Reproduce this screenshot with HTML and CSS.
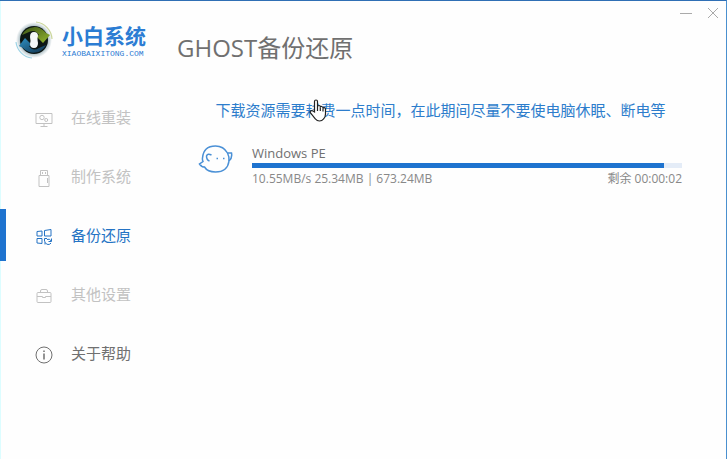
FILE: index.html
```html
<!DOCTYPE html>
<html lang="zh-CN">
<head>
    <meta charset="UTF-8">
    <meta name="viewport" content="width=device-width, initial-scale=1.0">
    <title>小白系统</title>
    <link rel="stylesheet" href="styles.css">
</head>
<body>
    <div class="window">
        <aside class="sidebar">
            <div class="logo">
                <svg class="logo-mark" viewBox="0 0 38 40" aria-hidden="true">
                    <defs>
                        <linearGradient id="green" x1="0" y1="0" x2="1" y2="1">
                            <stop offset="0" stop-color="#3c5416"/>
                            <stop offset="1" stop-color="#94b82e"/>
                        </linearGradient>
                        <linearGradient id="blue" x1="0" y1="0" x2="1" y2="1">
                            <stop offset="0" stop-color="#2f92c6"/>
                            <stop offset="1" stop-color="#10304a"/>
                        </linearGradient>
                        <radialGradient id="halo">
                            <stop offset="0.75" stop-color="#a9bcc2"/>
                            <stop offset="1" stop-color="#ffffff"/>
                        </radialGradient>
                    </defs>
                    <circle cx="19" cy="20" r="18" fill="url(#halo)"/>
                    <circle cx="19" cy="20" r="14" fill="#0c1614"/>
                    <path d="M7 15A14 14 0 0 1 31 13L35 15L28 23L21 16L24 15Q20 9 14 12Z" fill="url(#green)"/>
                    <path d="M31 25A14 14 0 0 1 8 28L4 26L10 18L17 25L14 26Q18 32 24 28Z" fill="url(#blue)"/>
                    <path d="M19 12Q23 12 23 16Q22 18 23 23Q23 28 19 28Q15 28 15 24Q16 21 15 17Q15 12 19 12Z" fill="#f4f8f8"/>
                    <path d="M21 2A18 18 0 0 1 37 19" fill="none" stroke="#cbd69b" stroke-width="1.2"/>
                    <path d="M1 22A18 18 0 0 0 17 38" fill="none" stroke="#9dd3e5" stroke-width="1.2"/>
                </svg>
                <div class="logo-text">
                    <span class="logo-name">小白系统</span>
                    <span class="logo-url">XIAOBAIXITONG.COM</span>
                </div>
            </div>
            <nav class="nav">
                <a class="nav-item" href="#">
                    <svg class="icon" viewBox="0 0 18 18" aria-hidden="true">
                        <path d="M1 3.5h16v10H1zM9 13.5v3M5.5 16.5h7"/>
                        <circle cx="7" cy="7.5" r="2.2"/>
                        <circle cx="11.2" cy="10" r="1.5"/>
                    </svg>
                    <span>在线重装</span>
                </a>
                <a class="nav-item" href="#">
                    <svg class="icon" viewBox="0 0 18 18" aria-hidden="true">
                        <path d="M5.5 6.5v-5h7v5M4 6.5h10v11H4zM7.5 3v2M10.5 3v2M12.5 9v5"/>
                    </svg>
                    <span>制作系统</span>
                </a>
                <a class="nav-item active" href="#">
                    <svg class="icon" viewBox="0 0 18 18" aria-hidden="true">
                        <path d="M2 3.5l5-.5v5H2zM9.5 2.500l6.500-1V8H9.500zM2 10.500h5v5L2 15zM12 10.500H9.500v3"/>
                        <path d="M16.500 10.500v3h-3M16.200 13A3.200 3.200 0 0 0 12 11.500M10 13.500v3M10.300 14.500a3.200 3.200 0 0 0 5.700.5"/>
                    </svg>
                    <span>备份还原</span>
                </a>
                <a class="nav-item" href="#">
                    <svg class="icon" viewBox="0 0 18 18" aria-hidden="true">
                        <rect x="2" y="5.500" width="14" height="10" rx="1"/>
                        <path d="M5.500 5.500v-1.500q0-1.500 1.500-1.500h4q1.500 0 1.500 1.500v1.500M2 9.500h5.500v1h3v-1H16"/>
                    </svg>
                    <span>其他设置</span>
                </a>
                <a class="nav-item enabled" href="#">
                    <svg class="icon" viewBox="0 0 18 18" aria-hidden="true">
                        <circle cx="9" cy="9" r="8"/>
                        <path d="M9 7.500v6M9 4.500v1.500" stroke-width="1.500"/>
                    </svg>
                    <span>关于帮助</span>
                </a>
            </nav>
        </aside>

        <main class="main">
            <div class="window-buttons">
                <button type="button" aria-label="最小化">
                    <svg viewBox="0 0 12 12"><path d="M0 6.500h12"/></svg>
                </button>
                <button type="button" aria-label="关闭">
                    <svg viewBox="0 0 12 12"><path d="M1 1l10 10M11 1L1 11"/></svg>
                </button>
            </div>
            <h1 class="title">GHOST备份还原</h1>
            <p class="notice">
                下载资源需要耗费一点时间，在此期间尽量不要使电脑休眠、断电等
                <svg class="cursor" viewBox="0 0 18 23" aria-hidden="true">
                    <path d="M5.500 13V2.500Q5.500 1 7 1T8.500 2.500V8Q8.500 6.500 10 6.500T11.300 8V8.500Q11.500 7.300 12.700 7.500T14 9V9.500Q14.300 8.500 15.300 8.700T16.500 10V15Q16.500 18 14.500 20Q13 22 10.500 22Q8 22 6.500 20L1.500 14Q.7 12.700 1.700 12T4 12Z"/>
                    <path d="M8.500 8v4M11.300 8.500v3.500M14 9.500v3"/>
                </svg>
            </p>
            <section class="download">
                <svg class="ghost" viewBox="0 0 34 30" aria-hidden="true">
                    <path d="M4 13Q5 1 17 1Q25 1 29 8L33 8Q34 13 30.500 16Q29 27 17 27Q9 27 6 22Q3 22 1 19L4.500 16.500Q3.700 15 4 13Z"/>
                    <path d="M29 8Q31 12 30.500 16M13 10Q9 8 8 11Q8 15 11 16"/>
                    <path d="M18 13.500h1.500M24.500 13.500H26"/>
                </svg>
                <div class="download-info">
                    <label class="download-name" for="progress">Windows PE</label>
                    <progress id="progress" value="412" max="430"></progress>
                    <div class="download-stats">
                        <span>10.55MB/s 25.34MB | 673.24MB</span>
                        <span>剩余 00:00:02</span>
                    </div>
                </div>
            </section>
        </main>
    </div>
</body>
</html>
```

FILE: styles.css
```css
* {
    box-sizing: border-box;
}
body {
    margin: 0;
    font-family: "Open Sans", "Noto Sans CJK SC", sans-serif;
    color: #707070;
    background-color: #fefefe;
}
.window {
    display: flex;
    min-height: 100vh;
    border-top: 1px solid #2f6fb5;
    border-right: 1px solid #4a90cf;
}
.sidebar {
    flex: none;
    width: 177px;
    border-left: 1px solid #dcfdff;
}
.logo {
    display: flex;
    align-items: center;
    gap: 9px;
    height: 78px;
    padding-left: 14px;
}
.logo-mark {
    width: 38px;
    height: 40px;
}
.logo-text {
    display: flex;
    flex-direction: column;
    gap: 2px;
    padding-top: 2px;
    color: #2b7cd3;
}
.logo-name {
    font-size: 21px;
    font-weight: 700;
    line-height: 24px;
}
.logo-url {
    font-family: "Liberation Mono", monospace;
    font-size: 8px;
    line-height: 8px;
}
.nav {
    display: flex;
    flex-direction: column;
    gap: 7px;
    margin-left: -1px;
    padding-top: 12px;
}
.nav-item {
    display: flex;
    align-items: center;
    gap: 18px;
    height: 52px;
    padding-bottom: 2px;
    padding-left: 29px;
    border-left: 6px solid transparent;
    font-size: 15px;
    color: #c2c2c2;
    text-decoration: none;
}
.nav-item.active {
    border-left-color: #1e73cf;
    color: #2473c4;
}
.nav-item.enabled {
    color: #707070;
}
svg {
    flex: none;
    fill: none;
    stroke: currentColor;
    stroke-width: 1;
}
.icon {
    width: 18px;
    height: 18px;
    margin-top: 5px;
}
.logo-mark {
    stroke: none;
}
.main {
    flex: 1;
    min-width: 0;
}
.window-buttons {
    display: flex;
    justify-content: flex-end;
    gap: 15px;
    height: 24px;
    padding-right: 7px;
}
.window-buttons button {
    display: flex;
    align-items: center;
    padding: 0;
    border: none;
    background: none;
    color: #aaa;
    cursor: pointer;
}
.window-buttons svg {
    width: 12px;
    height: 12px;
}
.title {
    margin: 0;
    font-size: 24px;
    font-weight: 400;
    line-height: 46px;
}
.notice {
    position: relative;
    margin: 27px 0 0;
    padding-right: 22px;
    font-size: 15px;
    line-height: 24px;
    text-align: center;
    color: #2d7dcc;
}
.cursor {
    position: absolute;
    top: 1px;
    left: 132px;
    width: 18px;
    height: 23px;
    fill: #fff;
    stroke: #222;
    stroke-width: 1.2;
}
.download {
    display: flex;
    gap: 19px;
    padding: 21px 44px 0 21px;
}
.ghost {
    width: 35px;
    height: 30px;
    margin-top: 2px;
    stroke: #4a90d6;
    stroke-width: 1.5;
}
.download-info {
    flex: 1;
}
.download-name {
    display: block;
    font-size: 13px;
    line-height: 20px;
}
progress {
    display: block;
    width: 100%;
    height: 5px;
    border: none;
    background-color: #e4ecf7;
    appearance: none;
}
progress::-webkit-progress-bar {
    background-color: #e4ecf7;
}
progress::-webkit-progress-value {
    background-color: #1e73cf;
}
.download-stats {
    display: flex;
    justify-content: space-between;
    font-size: 12px;
    line-height: 22px;
    color: #888;
}
```
